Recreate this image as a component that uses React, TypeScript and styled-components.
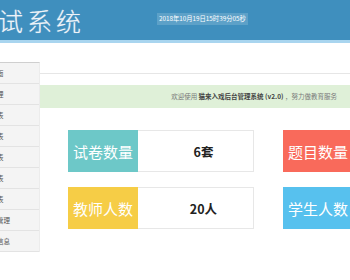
import React from "react";
import styled, { createGlobalStyle } from "styled-components";

const GlobalStyle = createGlobalStyle`
  html, body { margin: 0; padding: 0; background: #ffffff; overflow: hidden; }
  body { font-family: "Noto Sans CJK SC", "Noto Sans", sans-serif; }
`;

const Page = styled.div`
  width: 450px;
  margin-left: -100px;
`;

const Header = styled.header`
  height: 40px;
  background: #3f8fbe;
  border-bottom: 3px solid #a9d5ef;
  display: flex;
  align-items: center;
`;

const Title = styled.h1`
  margin: 0 0 0 69px;
  font-family: "Noto Sans CJK SC", sans-serif;
  font-weight: 300;
  font-size: 25px;
  letter-spacing: 4px;
  color: #eef3f8;
  text-shadow: 0 0 1px rgba(255, 255, 255, 0.6);
  line-height: 40px;
`;

const DateBox = styled.div`
  margin-left: 72px;
  margin-top: -2px;
  padding: 2px 2px;
  background: rgba(255, 255, 255, 0.16);
  color: #ffffff;
  font-size: 6.3px;
  line-height: 8px;
  white-space: nowrap;
`;

const Body = styled.div`
  display: flex;
`;

const Sidebar = styled.nav`
  width: 140px;
  padding-top: 19px;
  flex-shrink: 0;
`;

const Menu = styled.ul`
  list-style: none;
  margin: 0;
  padding: 0;
  background: #f4f4f4;
  border-top: 1px solid #cfcfcf;
  border-right: 1px solid #ececec;
`;

const MenuItem = styled.li`
  height: 20px;
  line-height: 20px;
  border-bottom: 1px solid #e3e3e3;
  padding-left: 71px;
  font-size: 6.5px;
  color: #555555;
  white-space: nowrap;
`;

const Main = styled.main`
  flex: 1;
  min-width: 0;
`;

const Crumb = styled.div`
  height: 30px;
  border-bottom: 1px solid #e6e6e6;
`;

const Alert = styled.div`
  margin-top: 11px;
  height: 23px;
  line-height: 23px;
  background: #dff0d8;
  text-align: right;
  padding-right: 13px;
  font-size: 6.5px;
  color: #7a7a7a;
  white-space: nowrap;
`;

const Strong = styled.b`
  color: #444444;
  font-weight: 700;
`;

const Cards = styled.div`
  margin-top: 22px;
  padding-left: 28px;
  display: grid;
  grid-template-columns: 186px 186px;
  column-gap: 29px;
  row-gap: 15px;
`;

const Card = styled.div`
  height: 42px;
  display: flex;
  border: 1px solid #e7e7e7;
  box-sizing: border-box;
`;

const Label = styled.div<{ $bg: string }>`
  width: 70px;
  flex-shrink: 0;
  margin: -1px 0 -1px -1px;
  background: ${(p) => p.$bg};
  color: #ffffff;
  font-size: 15px;
  display: flex;
  align-items: center;
  justify-content: center;
  white-space: nowrap;
`;

const Value = styled.div`
  flex: 1;
  display: flex;
  align-items: center;
  justify-content: center;
  padding-left: 16px;
  font-size: 12.5px;
  font-weight: 700;
  color: #222222;
`;

const menu = [
  "系统主页面",
  "管理员管理",
  "教师信息表",
  "学生信息表",
  "班级信息表",
  "题库信息表",
  "试卷信息表",
  "考试成绩管理",
  "修改个人信息",
];

const stats = [
  { label: "试卷数量", value: "6套", color: "#6dc8c8" },
  { label: "题目数量", value: "120道", color: "#f96a5b" },
  { label: "教师人数", value: "20人", color: "#f6cd46" },
  { label: "学生人数", value: "300人", color: "#57c1ee" },
];

export default function App() {
  return (
    <>
      <GlobalStyle />
      <Page>
        <Header>
          <Title>考试系统</Title>
          <DateBox>2018年10月19日15时39分05秒</DateBox>
        </Header>
        <Body>
          <Sidebar>
            <Menu>
              {menu.map((m) => (
                <MenuItem key={m}>{m}</MenuItem>
              ))}
            </Menu>
          </Sidebar>
          <Main>
            <Crumb />
            <Alert>
              欢迎使用 <Strong>猫来入戏后台管理系统</Strong> <Strong>(v2.0)</Strong> ，努力做教育服务
            </Alert>
            <Cards>
              {stats.map((s) => (
                <Card key={s.label}>
                  <Label $bg={s.color}>{s.label}</Label>
                  <Value>{s.value}</Value>
                </Card>
              ))}
            </Cards>
          </Main>
        </Body>
      </Page>
    </>
  );
}
